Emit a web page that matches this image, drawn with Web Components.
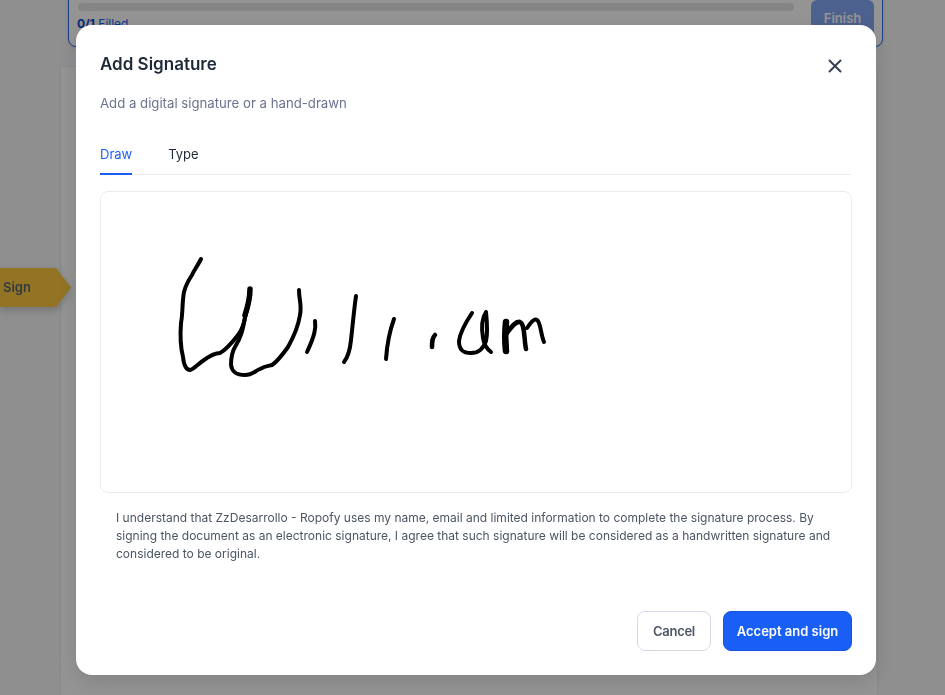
<!DOCTYPE html>
<html lang="en">
<head>
<meta charset="utf-8">
<title>Add Signature</title>
<style>
    html, body { margin: 0; height: 100%; overflow: hidden; }
    body { font-family: Inter, "Noto Sans", sans-serif; }
</style>
</head>
<body>
<doc-page></doc-page>
<signature-modal heading="Add Signature" subtitle="Add a digital signature or a hand-drawn">
    <sign-tabs></sign-tabs>
    <signature-pad></signature-pad>
    <p>I understand that ZzDesarrollo - Ropofy uses my name, email and limited information to complete the signature process. By signing the document as an electronic signature, I agree that such signature will be considered as a handwritten signature and considered to be original.</p>
    <action-button slot="actions">Cancel</action-button>
    <action-button slot="actions" primary>Accept and sign</action-button>
</signature-modal>

<script>
(function () {
    // Page behind the dialog, dimmed by the overlay
    class DocPage extends HTMLElement {
        constructor() {
            super();
            this.attachShadow({ mode: "open" }).innerHTML = `
            <style>
                :host { display: block; height: 695px; background: #f6f7f9; position: relative; overflow: hidden; font-family: inherit; }
                .toolbar {
                    box-sizing: border-box;
                    width: 815px; height: 63px;
                    margin: -16px 0 0 68px;
                    padding: 16px 8px 0 9px;
                    border: 1px solid #2f6bed;
                    border-radius: 8px;
                    background: #fff;
                    display: flex;
                    gap: 17px;
                    box-shadow: 0 1px 4px rgba(0,0,0,.12);
                }
                .progress { width: 716px; }
                .bar { height: 8px; margin-top: 2px; border-radius: 4px; background: #e5e5e5; }
                .count { margin: 5px 0 0 -1px; font-size: 12px; line-height: 15px; color: #1a5ff5; }
                .count b { font-weight: 700; color: #0b45c4; }
                .finish {
                    width: 63px; height: 40px; margin-top: -1px; padding-top: 10px;
                    box-sizing: border-box;
                    border-radius: 6px;
                    background: #85a8f5;
                    color: #fff; font-size: 13px; font-weight: 600; text-align: center;
                    line-height: 16px;
                }
                .paper { width: 816px; height: 640px; margin: 20px 0 0 61px; background: #fff; box-shadow: 0 0 1px rgba(0,0,0,.25); }
                .tag-wrap { position: absolute; left: 0; top: 268px; filter: drop-shadow(0 3px 4px rgba(0,0,0,.2)); }
                .tag {
                    width: 71px; height: 39px;
                    box-sizing: border-box;
                    padding-left: 3px;
                    background: #fdc840;
                    clip-path: polygon(0 0, 56px 0, 71px 50%, 56px 100%, 0 100%);
                    color: #5b6472; font-size: 13px; font-weight: 600; line-height: 39px;
                }
            </style>
            <div class="toolbar">
                <div class="progress">
                    <div class="bar"></div>
                    <div class="count"><b>0/1</b> Filled</div>
                </div>
                <div class="finish">Finish</div>
            </div>
            <div class="paper"></div>
            <div class="tag-wrap"><div class="tag">Sign</div></div>`;
        }
    }

    class SignatureModal extends HTMLElement {
        constructor() {
            super();
            const root = this.attachShadow({ mode: "open" });
            root.innerHTML = `
            <style>
                :host {
                    position: fixed; inset: 0;
                    display: block;
                    background: rgba(0, 0, 0, .42);
                    font-family: inherit;
                }
                .dialog {
                    box-sizing: border-box;
                    width: 800px; height: 650px;
                    margin: 25px 0 0 76px;
                    padding: 24px;
                    background: #fff;
                    border-radius: 16px;
                    box-shadow: 0 8px 24px rgba(0,0,0,.12);
                    display: flex;
                    flex-direction: column;
                }
                header { display: flex; justify-content: space-between; align-items: flex-start; }
                h2 { margin: 3px 0 0; font-size: 17px; line-height: 24px; font-weight: 600; color: #1f2937; }
                .close { margin: 1px 0 0; width: 32px; height: 32px; padding: 0; border: 0; background: none; display: block; }
                .sub { margin: 11px 0 0; font-size: 13.2px; line-height: 20px; color: #6b7390; }
                ::slotted(p) {
                    margin: 16px 16px 0 16px;
                    font-size: 12px; line-height: 18px; color: #4b5563;
                }
                footer { margin-top: auto; display: flex; justify-content: flex-end; gap: 12px; }
            </style>
            <div class="dialog" role="dialog">
                <header>
                    <h2></h2>
                    <button class="close" aria-label="Close">
                        <svg width="32" height="32" viewBox="0 0 32 32" fill="none" stroke="#374151" stroke-width="2" stroke-linecap="round" style="display:block;margin-left:-1px">
                            <path d="M10.5 10.5 L21.5 21.5 M21.5 10.5 L10.5 21.5"/>
                        </svg>
                    </button>
                </header>
                <div class="sub"></div>
                <slot></slot>
                <footer><slot name="actions"></slot></footer>
            </div>`;
            root.querySelector("h2").textContent = this.getAttribute("heading");
            root.querySelector(".sub").textContent = this.getAttribute("subtitle");
        }
    }

    class SignTabs extends HTMLElement {
        constructor() {
            super();
            this.attachShadow({ mode: "open" }).innerHTML = `
            <style>
                :host { display: flex; gap: 36px; margin-top: 21px; border-bottom: 1px solid #eceef3; font-size: 13px; }
                span { display: block; height: 41px; box-sizing: border-box; padding-top: 10px; line-height: 20px; color: #1f2937; margin-bottom: -1px; }
                .active { color: #1a5ff5; border-bottom: 2px solid #1a5ff5; }
            </style>
            <span class="active">Draw</span>
            <span>Type</span>`;
        }
    }

    // Hand-drawn strokes, coordinates follow the canvas box
    class SignaturePad extends HTMLElement {
        constructor() {
            super();
            this.attachShadow({ mode: "open" }).innerHTML = `
            <style>
                :host { display: block; box-sizing: border-box; height: 302px; margin-top: 16px; border: 1px solid #e9ebef; border-radius: 8px; overflow: hidden; }
                svg { display: block; }
            </style>
            <svg width="750" height="300" viewBox="101 192 750 300" fill="none" stroke="#000" stroke-width="4" stroke-linecap="round" stroke-linejoin="round">
                <path d="M201 259 C197 267 194 270 192 275 C188 281 185 288 184 292 C182 302 183 313 181 323 C180 336 180 345 183 357 C184 366 186 370 190 370 C194 369 198 364 204 360 C211 355 216 353 220 353 C226 350 231 344 238 335 C243 329 245 319 246 313 C248 305 250 298 250 289"/>
                <path d="M250 289 C250 300 248 308 245 317 C243 330 241 337 235 347 C232 352 231 358 231 365 C232 372 236 375 245 375 C252 375 255 371 260 369 C265 366 268 366 272 365 C278 361 283 354 288 347 C293 338 298 328 300 315 C302 305 299 300 299 290"/>
                <path d="M250 289 C250 298 248 306 245 315" stroke-width="5.5"/>
                <path d="M315 321 C316 328 315 335 307 352"/>
                <path d="M356 296 C354 310 353 322 351 340 C350 350 348 357 344 362"/>
                <path d="M394 319 C390 330 387 345 386 359"/>
                <path d="M435 335 C432 338 432 342 432 347" stroke-width="4.5"/>
                <path d="M472 313 C466 322 460 332 459 341 C459 350 463 353 471 353 C479 353 483 349 486 341 C488 333 487 322 486 312 C482 318 481 326 483 338 C484 345 487 349 491 352"/>
                <path d="M506 322 C505 332 505 342 506 351" stroke-width="6.5"/>
                <path d="M507 333 C512 326 516 321 520 322 C525 324 524 340 526 349" stroke-width="4.5"/>
                <path d="M527 328 C531 322 535 317 538 321 C541 326 541 335 544 342"/>
            </svg>`;
        }
    }

    class ActionButton extends HTMLElement {
        constructor() {
            super();
            this.attachShadow({ mode: "open" }).innerHTML = `
            <style>
                :host { display: block; }
                button {
                    width: 74px; height: 40px; padding: 0;
                    box-sizing: border-box;
                    border: 1px solid #d5d9e4; border-radius: 8px;
                    background: #fff; color: #4b5563;
                    font: 600 13px/20px Inter, "Noto Sans", sans-serif;
                    letter-spacing: -.3px;
                }
                :host([primary]) button { width: 129px; letter-spacing: 0; background: #1a5ff5; border-color: #1655e0; color: #fff; }
            </style>
            <button><slot></slot></button>`;
        }
    }

    customElements.define("doc-page", DocPage);
    customElements.define("signature-modal", SignatureModal);
    customElements.define("sign-tabs", SignTabs);
    customElements.define("signature-pad", SignaturePad);
    customElements.define("action-button", ActionButton);
})();
</script>
</body>
</html>
